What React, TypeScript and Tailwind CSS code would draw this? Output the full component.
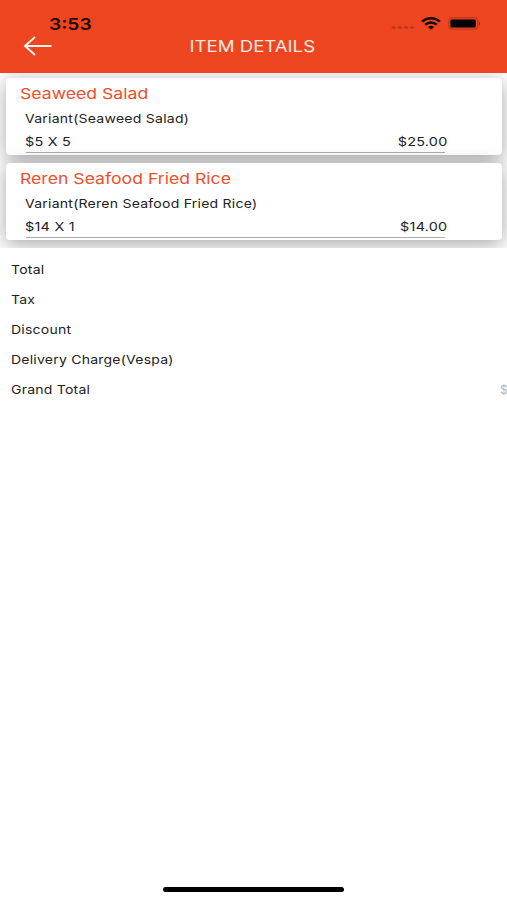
import React from "react"

const items = [
  { name: "Seaweed Salad", variant: "Variant(Seaweed Salad)", qty: "$5 X 5", price: "$25.00" },
  { name: "Reren Seafood Fried Rice", variant: "Variant(Reren Seafood Fried Rice)", qty: "$14 X 1", price: "$14.00" },
]

const totals = ["Total", "Tax", "Discount", "Delivery Charge(Vespa)", "Grand Total"]

function Header() {
  return (
    <header className="relative h-[73px] shrink-0 bg-[#ed4520]">
      <div className="flex h-[34px] items-end justify-between pl-[49px] pr-[26px]">
        <span className="origin-left scale-x-[1.2] text-[16px] font-semibold leading-[20px] text-[#1c0502]">3:53</span>
        <div className="flex h-[22px] items-center">
          <svg width="24" height="5" viewBox="0 0 24 5" className="mr-[6px] mt-[8px]" fill="#c23819">
            <ellipse cx="2.5" cy="2.5" rx="2" ry="1.5" />
            <ellipse cx="8.7" cy="2.5" rx="2" ry="1.5" />
            <ellipse cx="14.9" cy="2.5" rx="2" ry="1.5" />
            <ellipse cx="21.1" cy="2.5" rx="2" ry="1.5" />
          </svg>
          <svg width="20" height="13" viewBox="0 0 20 13" fill="none" stroke="#140301" strokeWidth="2.5">
            <path d="M1.2 4.6C6 0 14 0 18.8 4.6" />
            <path d="M4.3 7.7C7.4 4.6 12.6 4.6 15.7 7.7" />
            <path d="M7 10C8.7 8.4 11.3 8.4 13 10L10 12.8Z" fill="#140301" stroke="none" />
          </svg>
          <svg width="33" height="13" viewBox="0 0 33 13" className="ml-[7px]">
            <rect x="0.8" y="0.9" width="29" height="11.2" rx="3" fill="none" stroke="#b5351a" strokeWidth="1" />
            <rect x="2.4" y="2.4" width="25.4" height="8.2" rx="1.5" fill="#000" />
            <path d="M31 4.5C32.4 5 32.4 8 31 8.5Z" fill="#8c2712" />
          </svg>
        </div>
      </div>
      <div className="relative flex h-[24px] items-center justify-center pr-[3px]">
        <svg width="30" height="20" viewBox="0 0 30 20" className="absolute left-[23px] top-[2px]" fill="none" stroke="#fff2ee" strokeWidth="1.9">
          <path d="M28.5 10H2M12 1L2 10L12 19" />
        </svg>
        <h1 className="scale-x-[1.2] whitespace-nowrap pt-[2px] text-[15.5px] text-[#ffe9e3]">ITEM DETAILS</h1>
      </div>
    </header>
  )
}

function ItemCard({ item }: { item: (typeof items)[number] }) {
  return (
    <div className="relative h-[77px] rounded-[4px] bg-white pl-[13.5px] pt-[6px] shadow-[0_4px_20px_rgba(0,0,0,0.36)]">
      <h2 className="w-fit origin-left scale-x-[1.175] whitespace-nowrap text-[15px] leading-[20px] text-[#ed4f2d]">{item.name}</h2>
      <div className="ml-[5px] text-[12px] tracking-[0.2px] text-[#222]">
        <p className="mt-[6px] w-fit origin-left scale-x-[1.17] whitespace-nowrap leading-[18px]">{item.variant}</p>
        <div className="mr-[55px] mt-[5px] flex justify-between leading-[18px]">
          <span className="origin-left scale-x-[1.2]">{item.qty}</span>
          <span className="origin-right scale-x-[1.2]">{item.price}</span>
        </div>
        <div className="ml-[1.5px] mr-[57px] mt-px h-px bg-[#acacac]" />
      </div>
    </div>
  )
}

export default function App() {
  return (
    <div className="relative flex h-[900px] w-[507px] flex-col overflow-hidden bg-white font-['Inter',sans-serif]">
      <Header />
      <section className="flex h-[175px] flex-col gap-[8px] overflow-hidden pl-[6px] pr-[5px] pt-[5px]">
        {items.map((item) => (
          <ItemCard key={item.name} item={item} />
        ))}
      </section>
      <section className="pl-[11px] pt-[7px] text-[12px] tracking-[0.18px] text-[#222]">
        {totals.map((label) => (
          <div key={label} className="flex h-[30px] items-center justify-between">
            <span className="origin-left scale-x-[1.17] whitespace-nowrap">{label}</span>
            {label === "Grand Total" && <span className="-mr-px text-[#b5b5b5]">$</span>}
          </div>
        ))}
      </section>
      <div className="mx-auto mb-[8px] mt-auto h-[5px] w-[181px] rounded-full bg-black" />
    </div>
  )
}
